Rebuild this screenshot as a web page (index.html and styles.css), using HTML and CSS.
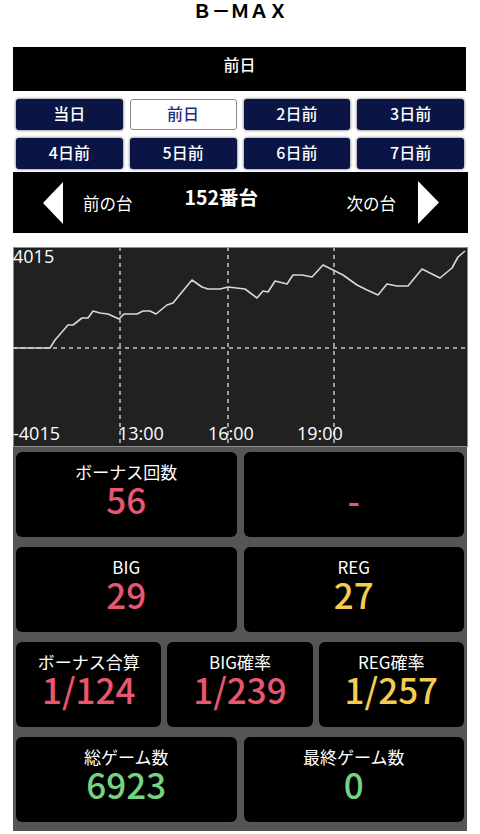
FILE: index.html
```html
<!DOCTYPE html>
<html lang="ja">
<head>
  <meta charset="UTF-8">
  <meta name="viewport" content="width=device-width, initial-scale=1.0">
  <title>B-MAX 152番台</title>
  <link rel="stylesheet" href="styles.css">
</head>
<body>
  <div class="page">
    <!-- Machine name -->
    <h1 class="site-title">Ｂ－ＭＡＸ</h1>

    <!-- Selected day -->
    <div class="day-bar">前日</div>

    <!-- Day tabs -->
    <div class="day-tabs">
      <a class="day-tab" href="#">当日</a>
      <a class="day-tab is-active" href="#">前日</a>
      <a class="day-tab" href="#">2日前</a>
      <a class="day-tab" href="#">3日前</a>
      <a class="day-tab" href="#">4日前</a>
      <a class="day-tab" href="#">5日前</a>
      <a class="day-tab" href="#">6日前</a>
      <a class="day-tab" href="#">7日前</a>
    </div>

    <!-- Prev / next machine -->
    <div class="machine-nav">
      <a class="nav-link nav-prev" href="#">
        <svg class="nav-arrow" width="20" height="42" viewBox="0 0 20 42"><polygon points="20,0 20,42 0,21" fill="#fff"/></svg>
        <span>前の台</span>
      </a>
      <div class="machine-no">152番台</div>
      <a class="nav-link nav-next" href="#">
        <span>次の台</span>
        <svg class="nav-arrow" width="21" height="43" viewBox="0 0 21 43"><polygon points="0,0 21,21.5 0,43" fill="#fff"/></svg>
      </a>
    </div>

    <!-- Slump graph -->
    <div class="graph">
      <svg class="graph-svg" viewBox="0 0 455 200" width="455" height="200">
        <g class="grid-lines">
          <line x1="107" y1="0" x2="107" y2="200"/>
          <line x1="215" y1="0" x2="215" y2="200"/>
          <line x1="321" y1="0" x2="321" y2="200"/>
          <line x1="0" y1="101" x2="455" y2="101"/>
        </g>
        <polyline class="graph-line" points="0,101 37,101 42,93 55,78 60,78 69,71 75,71 80,64 87,66 95,67 106,72 111,67 124,67 130,64 137,64 143,67 154,58 160,56 169,45 179,33 189,40 195,42 207,42 215,40 232,42 244,51 250,44 255,45 262,34 274,37 280,28 289,28 299,30 310,18 320,23 330,28 344,38 354,43 365,48 374,37 384,39 395,39 409,22 417,26 427,31 439,21 445,10 452,4"/>
        <g class="graph-labels">
          <text x="0" y="16">4015</text>
          <text x="0" y="193">-4015</text>
          <text x="105" y="193">13:00</text>
          <text x="195" y="193">16:00</text>
          <text x="284" y="193">19:00</text>
        </g>
      </svg>
    </div>

    <!-- Bonus data -->
    <div class="stats">
      <div class="stats-row">
        <div class="stat-card">
          <div class="stat-label">ボーナス回数</div>
          <div class="stat-value pink">56</div>
        </div>
        <div class="stat-card">
          <div class="stat-label">&nbsp;</div>
          <div class="stat-value pink">-</div>
        </div>
      </div>
      <div class="stats-row">
        <div class="stat-card">
          <div class="stat-label">BIG</div>
          <div class="stat-value pink">29</div>
        </div>
        <div class="stat-card">
          <div class="stat-label">REG</div>
          <div class="stat-value yellow">27</div>
        </div>
      </div>
      <div class="stats-row three">
        <div class="stat-card">
          <div class="stat-label">ボーナス合算</div>
          <div class="stat-value pink">1/124</div>
        </div>
        <div class="stat-card">
          <div class="stat-label">BIG確率</div>
          <div class="stat-value pink">1/239</div>
        </div>
        <div class="stat-card">
          <div class="stat-label">REG確率</div>
          <div class="stat-value yellow">1/257</div>
        </div>
      </div>
      <div class="stats-row">
        <div class="stat-card">
          <div class="stat-label">総ゲーム数</div>
          <div class="stat-value green">6923</div>
        </div>
        <div class="stat-card">
          <div class="stat-label">最終ゲーム数</div>
          <div class="stat-value green">0</div>
        </div>
      </div>
    </div>
  </div>
</body>
</html>
```

FILE: styles.css
```css
/* Base */
body {
  margin: 0;
  padding: 0;
  background: #fff;
  font-family: "Noto Sans CJK JP", "Noto Sans", sans-serif;
  color: #fff;
}

a {
  color: inherit;
  text-decoration: none;
}

.page {
  padding: 0 13px;
}

/* Title */
.site-title {
  margin: 0;
  height: 47px;
  line-height: 20px;
  font-size: 19px;
  font-weight: 700;
  color: #000;
  text-align: center;
}

/* Selected day bar */
.day-bar {
  height: 44px;
  box-sizing: border-box;
  padding-top: 5px;
  line-height: 24px;
  margin-right: 1px;
  background: #000;
  font-size: 16px;
  font-weight: 500;
  text-align: center;
}

/* Day tabs */
.day-tabs {
  display: grid;
  grid-template-columns: repeat(4, 1fr);
  grid-auto-rows: 31px;
  gap: 8px 7px;
  margin: 8px 3px 3px;
}

.day-tab {
  display: flex;
  justify-content: center;
  align-items: center;
  padding-bottom: 3px;
  background: #0a1545;
  border-radius: 3px;
  box-shadow: 0 0 3px rgba(0, 0, 0, 0.7);
  font-size: 16px;
  font-weight: 500;
}

.day-tab.is-active {
  background: #fff;
  color: #1c2f7a;
  border: 1px solid #8a8a8a;
  box-shadow: none;
}

/* Machine navigation */
.machine-nav {
  display: flex;
  align-items: center;
  height: 61px;
  margin-right: -1px;
  padding: 0 29px 0 30px;
  background: #000;
  font-size: 16.5px;
}

.nav-link {
  display: flex;
  align-items: center;
}

.nav-prev {
  gap: 20px;
}

.nav-next {
  gap: 22px;
  margin-left: auto;
}

.nav-arrow {
  display: block;
}

.machine-no {
  margin: 0 0 12px 52px;
  font-size: 19.5px;
  font-weight: 700;
}

/* Graph */
.graph {
  margin: 14px -1px 0 0;
  height: 200px;
  background: #212121;
  box-shadow: inset 0 0 0 1px #8c8c8c;
}

.graph-svg {
  display: block;
}

.grid-lines line {
  stroke: #9d9d9d;
  stroke-width: 2;
  stroke-dasharray: 4 4;
}

.graph-line {
  fill: none;
  stroke: #d8d8d8;
  stroke-width: 1.6;
  stroke-linejoin: round;
}

.graph-labels text {
  fill: #fff;
  font-family: "Open Sans", "Noto Sans", sans-serif;
  font-size: 18px;
}

/* Stats panel */
.stats {
  display: flex;
  flex-direction: column;
  gap: 10px;
  padding: 5px 3px 9px;
  background: #555;
}

.stats-row {
  display: grid;
  grid-template-columns: 1fr 1fr;
  gap: 7px;
}

.stats-row.three {
  grid-template-columns: 1fr 1fr 1fr;
  gap: 6px;
}

.stat-card {
  height: 85px;
  box-sizing: border-box;
  padding-top: 10px;
  background: #000;
  border-radius: 6px;
  text-align: center;
}

.stat-label {
  font-size: 17px;
  line-height: 20px;
}

.stat-value {
  font-size: 35px;
  line-height: 34px;
  font-weight: 500;
}

.pink {
  color: #e9566f;
}

.yellow {
  color: #f3cd52;
}

.green {
  color: #74d482;
}
```
